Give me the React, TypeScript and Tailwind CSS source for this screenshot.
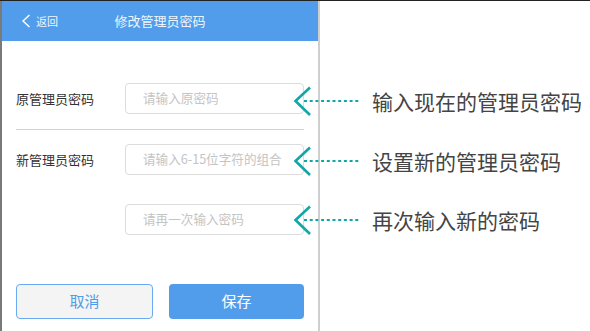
import { ReactNode } from "react";

const font = { fontFamily: '"Noto Sans CJK SC", "Noto Sans", sans-serif' };

const notes = [
  { top: 84, text: "输入现在的管理员密码" },
  { top: 144, text: "设置新的管理员密码" },
  { top: 203, text: "再次输入新的密码" },
];

function Field({ label, placeholder }: { label?: string; placeholder: string }) {
  return (
    <div className="flex h-[31px] items-center">
      <div className="w-[109px] text-[13px] text-[#333]">{label}</div>
      <div className="flex h-[31px] w-[179px] items-center rounded-[4px] border border-[#dcdcdc] bg-white pl-[17px] text-[12.6px] text-[#c4c4c4]">
        {placeholder}
      </div>
    </div>
  );
}

function Callout({ top, children }: { top: number; children: ReactNode }) {
  return (
    <div className="absolute left-[292px] flex h-[32px] items-center" style={{ top }}>
      <svg width="72" height="32" viewBox="0 0 72 32">
        <path d="M18 2.5 L3.5 16 L18 30" fill="none" stroke="#12a6a8" strokeWidth="2.6" />
        <line x1="12" y1="16" x2="69" y2="16" stroke="#12a6a8" strokeWidth="2.2" strokeDasharray="3 2.7" />
      </svg>
      <span className="ml-[8px] text-[21px] leading-none text-[#444]">{children}</span>
    </div>
  );
}

export default function App() {
  return (
    <div className="relative flex h-[331px] w-[590px] border-t border-[#222] bg-white" style={font}>
      <div className="flex w-[320px] flex-col border-r-2 border-l-2 border-l-[#7a7a7a] border-r-[#cfcfcf]">
        <div className="relative flex h-[40px] items-center bg-[#529deb] px-[19px] text-white">
          <svg width="12" height="14" viewBox="0 0 12 14" className="mr-[3px]">
            <path d="M8.5 1 L2 7 L8.5 13" fill="none" stroke="white" strokeWidth="1.4" />
          </svg>
          <span className="text-[11px] text-[#eef5fd]">返回</span>
          <span className="absolute left-0 right-0 text-center text-[13px] text-[#eef5fd]">修改管理员密码</span>
        </div>

        <div className="flex flex-col px-[14px] pt-[42px]">
          <Field label="原管理员密码" placeholder="请输入原密码" />
          <div className="mt-[15px] h-px bg-[#d2d2d2]" />
          <div className="mt-[14px]">
            <Field label="新管理员密码" placeholder="请输入6-15位字符的组合" />
          </div>
          <div className="mt-[29px]">
            <Field placeholder="请再一次输入密码" />
          </div>
          <div className="mt-[49px] flex gap-[16px]">
            <button className="h-[35px] flex-1 rounded-[4px] border border-[#6aaaf0] bg-[#f4f4f4] text-[15px] text-[#4f9de8]">
              取消
            </button>
            <button className="h-[35px] flex-1 rounded-[4px] bg-[#529deb] text-[15px] text-white">
              保存
            </button>
          </div>
        </div>
      </div>

      {notes.map((n) => (
        <Callout key={n.text} top={n.top}>
          {n.text}
        </Callout>
      ))}
    </div>
  );
}
